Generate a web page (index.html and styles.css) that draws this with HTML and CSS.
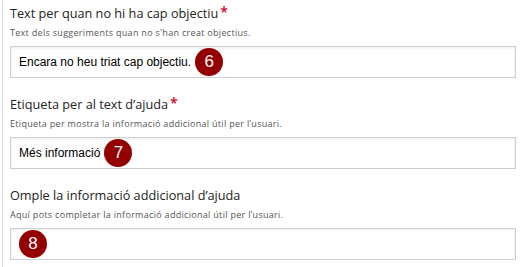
FILE: index.html
```html
<!DOCTYPE html>
<html lang="ca">
<head>
<meta charset="utf-8">
<link rel="stylesheet" href="styles.css">
</head>
<body>
<div class="panel">
  <div class="field">
    <div class="label">Text per quan no hi ha cap objectiu<span class="req">*</span></div>
    <div class="help">Text dels suggeriments quan no s'han creat objectius.</div>
    <div class="input"><span class="val">Encara no heu triat cap objectiu.</span><span class="badge">6</span></div>
  </div>
  <div class="field">
    <div class="label">Etiqueta per al text d’ajuda<span class="req">*</span></div>
    <div class="help">Etiqueta per mostra la informació addicional útil per l’usuari.</div>
    <div class="input"><span class="val">Més informació</span><span class="badge">7</span></div>
  </div>
  <div class="field">
    <div class="label">Omple la informació addicional d’ajuda</div>
    <div class="help">Aquí pots completar la informació addicional útil per l’usuari.</div>
    <div class="input"><span class="badge">8</span></div>
  </div>
</div>
</body>
</html>
```
FILE: styles.css
```css
html, body {
  margin: 0;
  padding: 0;
  background: #fff;
}
.panel {
  margin-left: 2px;
  border-left: 1px solid #dcdcdc;
  padding: 3px 10px 0 7px;
  height: 267px;
  box-sizing: border-box;
  display: flex;
  flex-direction: column;
  gap: 16px;
}
.field {
  display: flex;
  flex-direction: column;
}
.label {
  font-family: "Open Sans", sans-serif;
  font-size: 12.7px;
  line-height: 20px;
  color: #222;
}
.req {
  color: #d0021b;
  font-size: 14px;
  font-weight: 600;
  margin-left: 2px;
  position: relative;
  top: -1px;
}
.help {
  font-family: "Open Sans", sans-serif;
  font-size: 9px;
  letter-spacing: 0.3px;
  line-height: 14px;
  color: #555;
  margin-top: 3px;
}
.input {
  margin-top: 6px;
  height: 32px;
  box-sizing: border-box;
  border: 1px solid #cfcfcf;
  box-shadow: inset 0 1px 3px rgba(0,0,0,0.08);
  background: #fff;
  display: flex;
  align-items: center;
  padding-left: 8px;
  gap: 4px;
}
.val {
  font-family: "Liberation Sans", Arial, sans-serif;
  font-size: 12px;
  color: #000;
}
.badge {
  width: 28px;
  height: 28px;
  border-radius: 50%;
  background: #940000;
  color: #fff;
  font-family: "Liberation Sans", Arial, sans-serif;
  font-size: 17px;
  display: flex;
  align-items: center;
  justify-content: center;
}
```
